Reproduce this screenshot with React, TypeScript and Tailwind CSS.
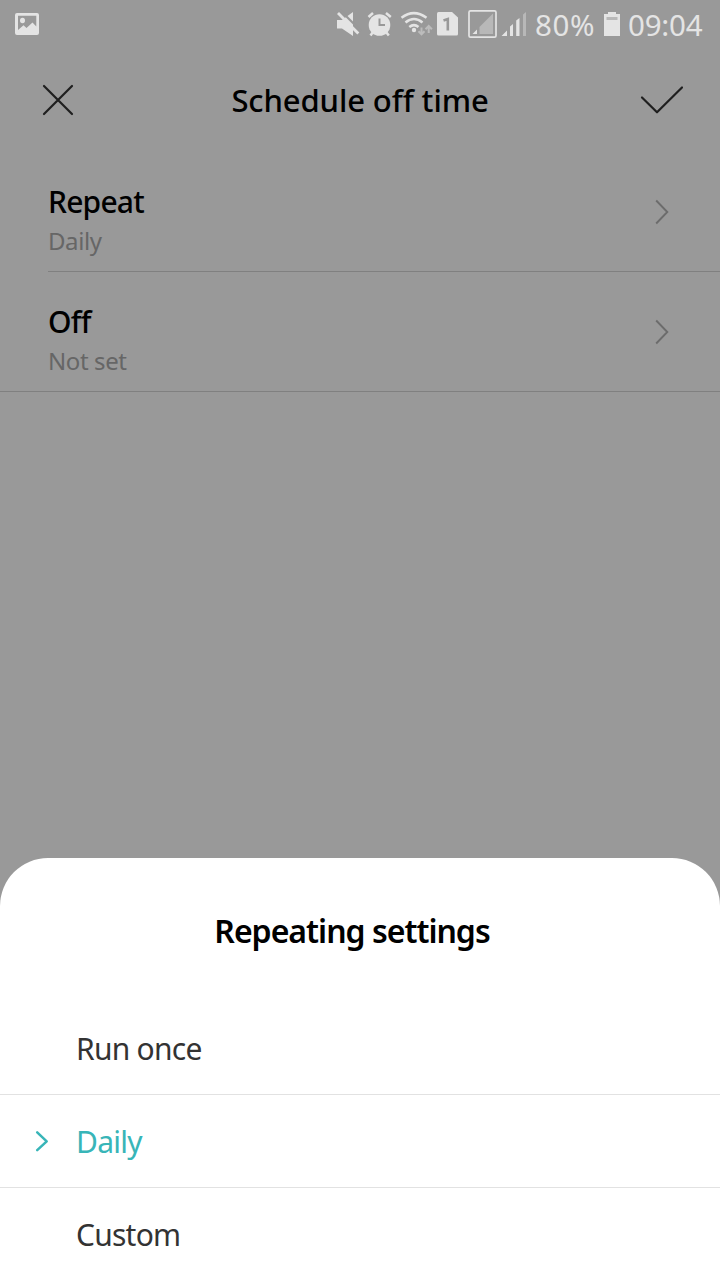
import React from "react";

function StatusBar() {
  return (
    <header className="flex h-12 items-start text-[#e4e4e4]">
      <svg className="ml-[15px] mt-[13px] h-[22px] w-6 shrink-0" viewBox="15 13 24 22" fill="currentColor">
        <path fillRule="evenodd" d="M17 13H37Q39 13 39 15V33Q39 35 37 35H17Q15 35 15 33V15Q15 13 17 13ZM18 15.7V30L23.5 25.3L26.5 28L32.5 22.5L36.3 26.5V15.7Z" />
        <ellipse cx="22.5" cy="20.5" rx="2.5" ry="2.8" />
      </svg>
      <div className="ml-[297px] flex h-12 shrink-0">
        <svg className="h-12 w-[26px]" viewBox="336 0 26 48" fill="currentColor">
          <path d="M337 20H342L353 12V36L342 28.5H337Z" />
          <path d="M339.5 9.5L361 31" stroke="#999999" strokeWidth="2.2" />
          <path d="M338 13L358.3 33.5" stroke="currentColor" strokeWidth="2.8" />
        </svg>
        <svg className="h-12 w-[36px]" viewBox="362 0 36 48" fill="none" stroke="currentColor">
          <circle cx="379.5" cy="25" r="10.8" fill="currentColor" stroke="none" />
          <path d="M368.5 17L373 13M386 13L390.8 17M373 32L370.5 35.5M386 32L388.8 35.5" strokeWidth="2.5" />
          <path d="M379.5 18.5V25H385" stroke="#999999" strokeWidth="2" />
        </svg>
        <svg className="h-12 w-[38px]" viewBox="398 0 38 48" fill="none" stroke="currentColor">
          <path d="M401.5 17.7Q413.8 8.5 426.5 17.7M405.5 22.5Q414 15.6 422.5 22.5M409.3 27Q414 23.2 418.5 27" strokeWidth="2.5" />
          <circle cx="414" cy="30" r="2.2" fill="currentColor" stroke="none" />
          <path d="M421.5 27.5V34M418.5 31.3L421.5 34.3L424.5 31.3M428.7 33V26.5M425.5 29.3L428.7 26L431.9 29.3" stroke="#bcbcbc" strokeWidth="2" />
        </svg>
        <svg className="h-12 w-[28px]" viewBox="436 0 28 48" fill="currentColor">
          <path d="M438.5 12H452L458 17.5V34Q458 35.5 456.5 35.5H438.5Q437 35.5 437 34V13.5Q437 12 438.5 12Z" />
          <path d="M443.5 20.5L447.8 19V30.5" fill="none" stroke="#999999" strokeWidth="2.6" />
        </svg>
        <svg className="h-12 w-[36px]" viewBox="464 0 36 48" fill="none">
          <rect x="469" y="10.8" width="27" height="26.4" rx="1.5" stroke="currentColor" strokeWidth="1.7" />
          <path d="M479.5 34V27L493 13.5V34Z" fill="#b8b8b8" />
          <path d="M472.5 34L477 29.5V34Z" fill="currentColor" />
        </svg>
        <svg className="h-12 w-[28px]" viewBox="500 0 28 48" fill="currentColor">
          <path d="M501.5 36L507 30.5V36ZM510 36V26.5L513 24V36ZM516.2 36V20.5L519.5 18V36Z" />
          <path d="M523 36V14.5L526 12V36Z" fill="#b8b8b8" />
        </svg>
      </div>
      <span className="ml-[7px] w-[68px] shrink-0 whitespace-nowrap text-[29.5px] leading-[49px] tracking-[0.6px]">80%</span>
      <svg className="h-12 w-[18px] shrink-0" viewBox="603 0 18 48" fill="currentColor">
        <path d="M604 14H608V12H616V14H620V36H604Z" />
        <path d="M606.5 17H617.5V20H606.5Z" fill="#b8b8b8" />
      </svg>
      <span className="ml-[7px] shrink-0 whitespace-nowrap text-[29.5px] leading-[49px] tracking-[-0.2px]">09:04</span>
    </header>
  );
}

function Chevron() {
  return (
    <svg className="mr-[50px] h-7 w-4" viewBox="654 198 16 28" fill="none" stroke="#6c6c6c" strokeWidth="1.9">
      <path d="M656.2 200.5L667.3 212L656.2 223.5" />
    </svg>
  );
}

function SettingRow({ title, value }: { title: string; value: string }) {
  return (
    <div className="flex h-[119px] items-center justify-between">
      <div className="pt-[18px]">
        <div className="text-[30px] font-medium leading-10 tracking-[-0.8px] text-black">{title}</div>
        <div className="text-[24px] leading-[37px] tracking-[-0.4px] text-[#666666]">{value}</div>
      </div>
      <Chevron />
    </div>
  );
}

function Option({ label, selected = false }: { label: string; selected?: boolean }) {
  return (
    <li className={`flex h-[93px] items-center ${selected ? "text-[#38b5b8]" : "text-[#333333]"}`}>
      <span className="flex w-[76px] shrink-0">
        {selected && (
          <svg className="mb-0.5 ml-[34px] h-6 w-4" viewBox="34 1129 16 24" fill="none" stroke="currentColor" strokeWidth="2.5" strokeLinecap="round" strokeLinejoin="round">
            <path d="M37.2 1132.3L46.7 1141.3L37.2 1150.2" />
          </svg>
        )}
      </span>
      <span className="text-[30px] leading-10 tracking-[-0.75px]">{label}</span>
    </li>
  );
}

export default function App() {
  return (
    <div className="flex h-[1280px] w-[720px] flex-col overflow-hidden bg-[#999999] font-['Noto_Sans',sans-serif]">
      <StatusBar />
      <nav className="flex h-[104px] items-center justify-between pl-[42px] pr-[36px]">
        <svg className="h-8 w-8" viewBox="42 84 32 32" fill="none" stroke="#1f1f1f" strokeWidth="2.2" strokeLinecap="round">
          <path d="M44 86L72 114M72 86L44 114" />
        </svg>
        <h1 className="ml-[6px] text-[31px] font-medium leading-10 tracking-[-0.1px] text-black">Schedule off time</h1>
        <svg className="h-8 w-11" viewBox="640 84 44 32" fill="none" stroke="#1f1f1f" strokeWidth="2.2" strokeLinecap="round" strokeLinejoin="round">
          <path d="M642 97.5L657 112.3L682 87.5" />
        </svg>
      </nav>
      <main className="flex-1">
        <div className="ml-12 border-b border-[#808080]">
          <SettingRow title="Repeat" value="Daily" />
        </div>
        <div className="border-b border-[#808080] pl-12">
          <SettingRow title="Off" value="Not set" />
        </div>
      </main>
      <section className="h-[422px] rounded-t-[48px] bg-white">
        <h2 className="mr-4 h-[144px] text-center text-[32px] font-semibold leading-[145px] tracking-[-1px] text-black">
          Repeating settings
        </h2>
        <ul>
          <Option label="Run once" />
          <li className="-mt-px h-px bg-[#e2e2e2]" />
          <Option label="Daily" selected />
          <li className="-mt-px h-px bg-[#e2e2e2]" />
          <Option label="Custom" />
        </ul>
      </section>
    </div>
  );
}
